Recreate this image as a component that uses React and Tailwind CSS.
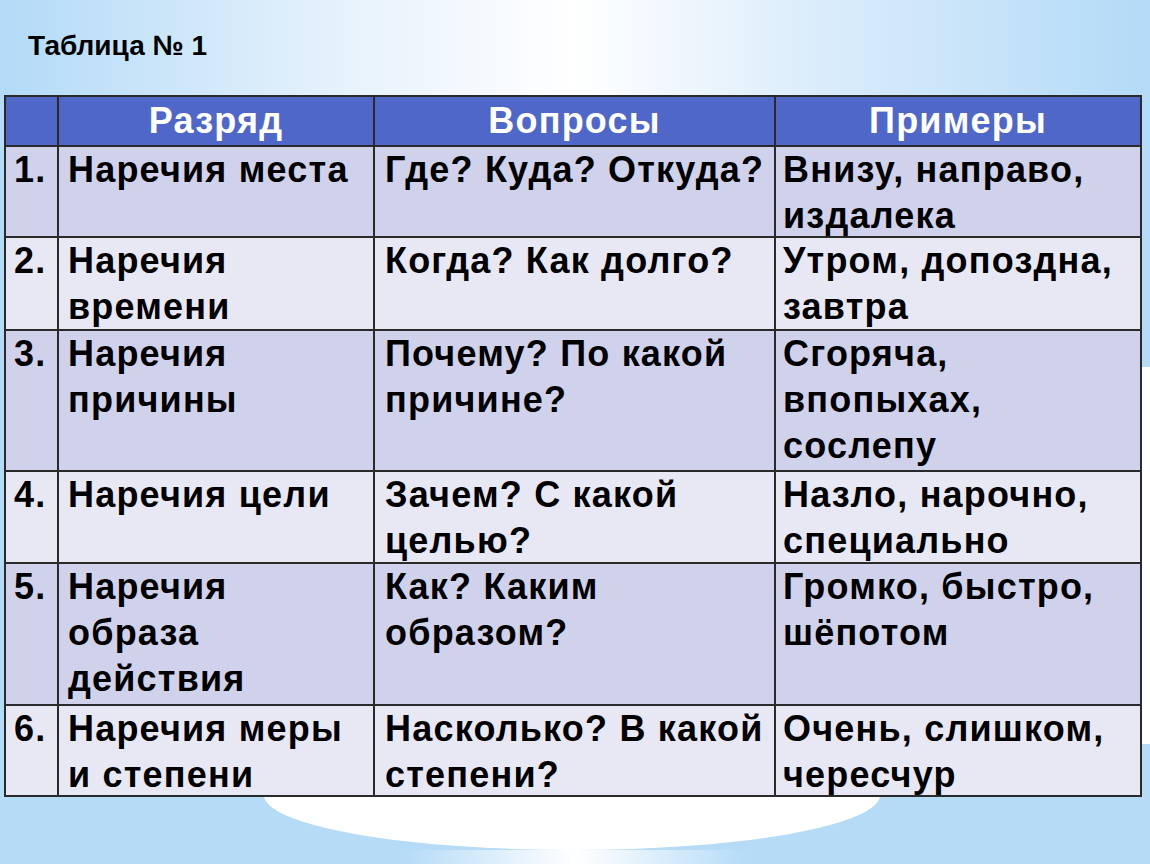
import React from "react";

const rows = [
  { n: "1.", a: ["Наречия места"], q: ["Где? Куда? Откуда?"], e: ["Внизу, направо,", "издалека"], h: "h-[89px]", bg: "bg-[#d0d2ec]" },
  { n: "2.", a: ["Наречия", "времени"], q: ["Когда? Как долго?"], e: ["Утром, допоздна,", "завтра"], h: "h-[91px]", bg: "bg-[#e8e8f5]" },
  { n: "3.", a: ["Наречия", "причины"], q: ["Почему? По какой", "причине?"], e: ["Сгоряча,", "впопыхах,", "сослепу"], h: "h-[139px]", bg: "bg-[#d0d2ec]" },
  { n: "4.", a: ["Наречия цели"], q: ["Зачем? С какой", "целью?"], e: ["Назло, нарочно,", "специально"], h: "h-[90px]", bg: "bg-[#e8e8f5]" },
  { n: "5.", a: ["Наречия", "образа", "действия"], q: ["Как? Каким", "образом?"], e: ["Громко, быстро,", "шёпотом"], h: "h-[140px]", bg: "bg-[#d0d2ec]" },
  { n: "6.", a: ["Наречия меры", "и степени"], q: ["Насколько? В какой", "степени?"], e: ["Очень, слишком,", "чересчур"], h: "h-[89px]", bg: "bg-[#e8e8f5]" },
];

function Lines({ items }) {
  return (
    <>
      {items.map((t, i) => (
        <div key={i} className="whitespace-nowrap">
          {t}
        </div>
      ))}
    </>
  );
}

export default function App() {
  return (
    <div
      className="relative w-[1150px] h-[864px] overflow-hidden bg-[linear-gradient(90deg,#b3daf7_0%,#e6f2fc_30%,#ffffff_50%,#dcedfb_70%,#b3daf7_100%)]"
      style={{ fontFamily: '"Liberation Sans", Arial, sans-serif' }}
    >
      {/* decorative slide background */}
      <div className="absolute left-0 top-[96px] w-[1150px] h-[768px] bg-[#b5dbf7]" />
      <div className="absolute left-[1142px] top-[367px] w-[8px] h-[377px] bg-white" />
      <div className="absolute left-[264px] top-[740px] w-[616px] h-[110px] rounded-[50%] bg-white" />
      <div className="absolute left-0 top-[850px] w-[1150px] h-[14px] bg-[linear-gradient(90deg,#b5dbf7_0%,#b5dbf7_35%,#ffffff_50%,#b5dbf7_65%,#b5dbf7_100%)]" />

      <div className="relative">
        <div className="pt-[31px] pl-[28px] h-[62px] text-[28px] leading-[30px] font-bold text-black">
          Таблица № 1
        </div>

        <div className="mt-[33px] ml-[4px] w-[1138px] border-2 border-[#2a2a2a] bg-[#2a2a2a] grid grid-cols-[51px_314px_399px_364px] gap-[2px] text-[36px] leading-[46px] font-bold tracking-[1.2px] text-black">
          <div className="h-[48px] bg-[#4f67c9]" />
          <div className="h-[48px] bg-[#4f67c9] text-white flex items-center justify-center">Разряд</div>
          <div className="h-[48px] bg-[#4f67c9] text-white flex items-center justify-center">Вопросы</div>
          <div className="h-[48px] bg-[#4f67c9] text-white flex items-center justify-center">Примеры</div>

          {rows.map((r, i) => (
            <React.Fragment key={i}>
              <div className={`${r.h} ${r.bg} pl-[8px]`}>{r.n}</div>
              <div className={`${r.h} ${r.bg} pl-[9px]`}>
                <Lines items={r.a} />
              </div>
              <div className={`${r.h} ${r.bg} pl-[10px]`}>
                <Lines items={r.q} />
              </div>
              <div className={`${r.h} ${r.bg} pl-[7px]`}>
                <Lines items={r.e} />
              </div>
            </React.Fragment>
          ))}
        </div>
      </div>
    </div>
  );
}
